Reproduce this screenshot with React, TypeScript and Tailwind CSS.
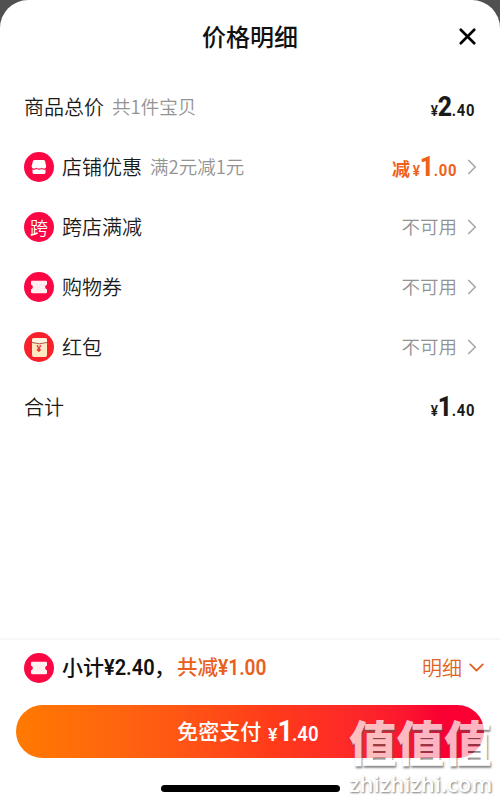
import { ChevronDown, ChevronRight, X } from "lucide-react";
import type { ReactNode } from "react";

function Badge({ children, className = "bg-[#fb0743]" }: { children: ReactNode; className?: string }) {
  return (
    <span className={`mr-2 flex h-[30px] w-[30px] shrink-0 items-center justify-center rounded-full text-white ${className}`}>
      {children}
    </span>
  );
}

function ShopIcon() {
  return (
    <svg width="30" height="30" viewBox="0 0 30 30" fill="#fff">
      <path d="M10.5 8h9c.8 0 1.300.4 1.500 1.100l1.100 4.600c.3 1.600-.7 2.900-2 2.900-1.100 0-1.800-.3-2.400-.9-.6.6-1.500.9-2.700.9s-2.100-.3-2.700-.9c-.6.6-1.300.9-2.400.9-1.500 0-2.500-1.300-2.200-2.900L9 9.100C9.200 8.400 9.700 8 10.500 8z" />
      <path d="M8.500 17.600c1.500.4 3 .2 4.100-.5 1.500.9 3.500.9 5 0 1.100.7 2.500.9 3.900.5v3c0 .9-.5 1.400-1.300 1.400H9.800c-.8 0-1.300-.5-1.300-1.400z" />
    </svg>
  );
}

function CouponIcon() {
  return (
    <svg width="30" height="30" viewBox="0 0 30 30">
      <path
        d="M8.200 8.700h13.600c.8 0 1.200.4 1.200 1.200v2.800c-1.200.2-1.800 1.100-1.800 2.300s.6 2.100 1.800 2.300v2.800c0 .8-.4 1.200-1.200 1.200H8.200c-.8 0-1.200-.4-1.200-1.200v-2.800c1.200-.2 1.800-1.100 1.800-2.300S8.200 12.900 7 12.700V9.900c0-.8.4-1.200 1.200-1.200z"
        fill="#fff0f2"
      />
      <path d="m17.500 12-5 6M12.500 12.500h1M16.500 17.500h1" stroke="#ffdde3" strokeWidth="1" fill="none" />
    </svg>
  );
}

function PacketIcon() {
  return (
    <span className="relative h-[19px] w-[15px] overflow-hidden rounded-[2px] bg-[#ffe8c4]">
      <svg className="absolute inset-0" width="15" height="19" viewBox="0 0 15 19" fill="none">
        <path d="M0 0h15v4q-7.500 3-15 0z" fill="#fff4df" />
        <path d="M0 4.500q7.500 2.500 15 0" stroke="#a8554a" strokeWidth="1" />
      </svg>
      <span className="absolute inset-x-0 top-[6px] text-center font-[Roboto] text-[9px] leading-[11px] font-bold text-[#e33a2c]">¥</span>
    </span>
  );
}

function Price({ int, dec, prefix, className = "" }: { int: string; dec: string; prefix?: string; className?: string }) {
  return (
    <span className={`flex items-baseline leading-none ${className}`}>
      {prefix && <span className="-mr-[4px] font-['Noto_Sans_CJK_SC',sans-serif] text-[18px] font-bold">{prefix}</span>}
      <span className="flex origin-right scale-x-[0.87] items-baseline font-[Roboto] font-extrabold">
        <span className="text-[15.5px] font-semibold">¥</span>
        <span className="text-[28.5px] tracking-[-0.5px]">{int}</span>
        <span className="text-[17px] font-bold tracking-[0.8px]">.{dec}</span>
      </span>
    </span>
  );
}

type Row = { label: string; note?: string; icon?: ReactNode; value: ReactNode; arrow?: boolean };

const unavailable = <span className="text-[18.5px] text-[#939393]">不可用</span>;

const rows: Row[] = [
  { label: "商品总价", note: "共1件宝贝", value: <Price int="2" dec="40" /> },
  {
    label: "店铺优惠",
    note: "满2元减1元",
    icon: <Badge><ShopIcon /></Badge>,
    value: <Price prefix="减" int="1" dec="00" className="text-[#ef601a]" />,
    arrow: true,
  },
  {
    label: "跨店满减",
    icon: <Badge><span className="text-[18px] leading-none font-normal">跨</span></Badge>,
    value: unavailable,
    arrow: true,
  },
  { label: "购物券", icon: <Badge><CouponIcon /></Badge>, value: unavailable, arrow: true },
  { label: "红包", icon: <Badge className="bg-[#f8202a]"><PacketIcon /></Badge>, value: unavailable, arrow: true },
  { label: "合计", value: <Price int="1" dec="40" /> },
];

export default function App() {
  return (
    <div className="h-[802px] w-[500px] overflow-hidden bg-[#505050] font-['Noto_Sans_CJK_SC_DemiLight','Noto_Sans_CJK_SC',sans-serif] font-[350] text-[#1a1a1a]">
      <div className="relative flex h-full flex-col rounded-t-[28px] bg-white">
        {/* Title */}
        <header className="flex h-[77px] shrink-0 items-center justify-center pb-[5px]">
          <h1 className="font-['Noto_Sans_CJK_SC',sans-serif] text-[24px] leading-none font-medium text-[#111]">价格明细</h1>
          <button className="absolute top-[23px] right-[19px]">
            <X size={27} strokeWidth={2.400} color="#000" />
          </button>
        </header>

        {/* Price rows */}
        <ul className="flex-1">
          {rows.map((r) => (
            <li key={r.label} className="flex h-[60px] items-center pl-6 pr-[25px]">
              {r.icon}
              <span className="text-[20px] leading-none">{r.label}</span>
              {r.note && <span className="-mt-[1px] ml-2 text-[18.5px] leading-none text-[#939393]">{r.note}</span>}
              <span className="ml-auto flex items-center">
                {r.value}
                {r.arrow && <ChevronRight size={26} strokeWidth={1.600} className="-mr-[10px] ml-[2px] text-[#aaa]" />}
              </span>
            </li>
          ))}
        </ul>

        {/* Bottom bar */}
        <footer className="h-[164px] shrink-0 border-t-2 border-[#f7f7f7] font-['Noto_Sans_CJK_SC',sans-serif]">
          <div className="flex h-[55px] items-center pr-[11px] pl-6">
            <Badge><CouponIcon /></Badge>
            <div className="flex w-[115px] items-baseline text-[21px] leading-none font-medium text-[#111]">
              小计
              <span className="w-[50px] origin-left scale-x-[0.91] font-[Roboto] text-[22px] font-semibold">¥2.40</span>
              <span>，</span>
            </div>
            <div className="flex items-baseline text-[20.5px] leading-none font-medium text-[#e8601c]">
              共减
              <span className="origin-left scale-x-[0.87] font-[Roboto] text-[22px] font-semibold">¥1.00</span>
            </div>
            <div className="ml-auto flex items-center font-['Noto_Sans_CJK_SC_DemiLight','Noto_Sans_CJK_SC',sans-serif] text-[20px] leading-none font-[350] text-[#e0621f]">
              明细
              <ChevronDown size={25} strokeWidth={1.800} className="ml-[2px]" />
            </div>
          </div>
          <button className="mx-4 mt-[10px] flex h-[53px] w-[468px] items-center justify-center rounded-full bg-linear-to-r from-[#ff7a00] via-[#ff3a1a] via-55% to-[#fb0032] to-90% pb-[1px] text-white">
            <span className="mr-[7px] -mt-[2px] text-[21px] leading-none font-medium">免密支付</span>
            <span className="flex origin-left scale-x-[0.93] items-baseline font-[Roboto] leading-none font-bold">
              <span className="text-[19px] font-semibold">¥</span>
              <span className="text-[29px] tracking-[-1px]">1</span>
              <span className="text-[20px] font-semibold">.40</span>
            </span>
          </button>
          <div className="mx-auto mt-[27px] h-[7px] w-[179px] rounded-full bg-black" />
        </footer>

        {/* Site watermark */}
        <div className="pointer-events-none absolute top-[717px] left-[349px] w-[150px] font-['Noto_Sans_CJK_SC',sans-serif] text-white">
          <div className="text-[47.500px] leading-[48px] font-black whitespace-nowrap opacity-[0.7] [text-shadow:1px_2px_2px_#555]">值值值</div>
          <div className="mt-[5px] font-['Open_Sans'] text-[22px] leading-[26px] font-semibold whitespace-nowrap opacity-[0.7] [text-shadow:1px_1px_2px_#444]">zhizhizhi.com</div>
        </div>
      </div>
    </div>
  );
}
